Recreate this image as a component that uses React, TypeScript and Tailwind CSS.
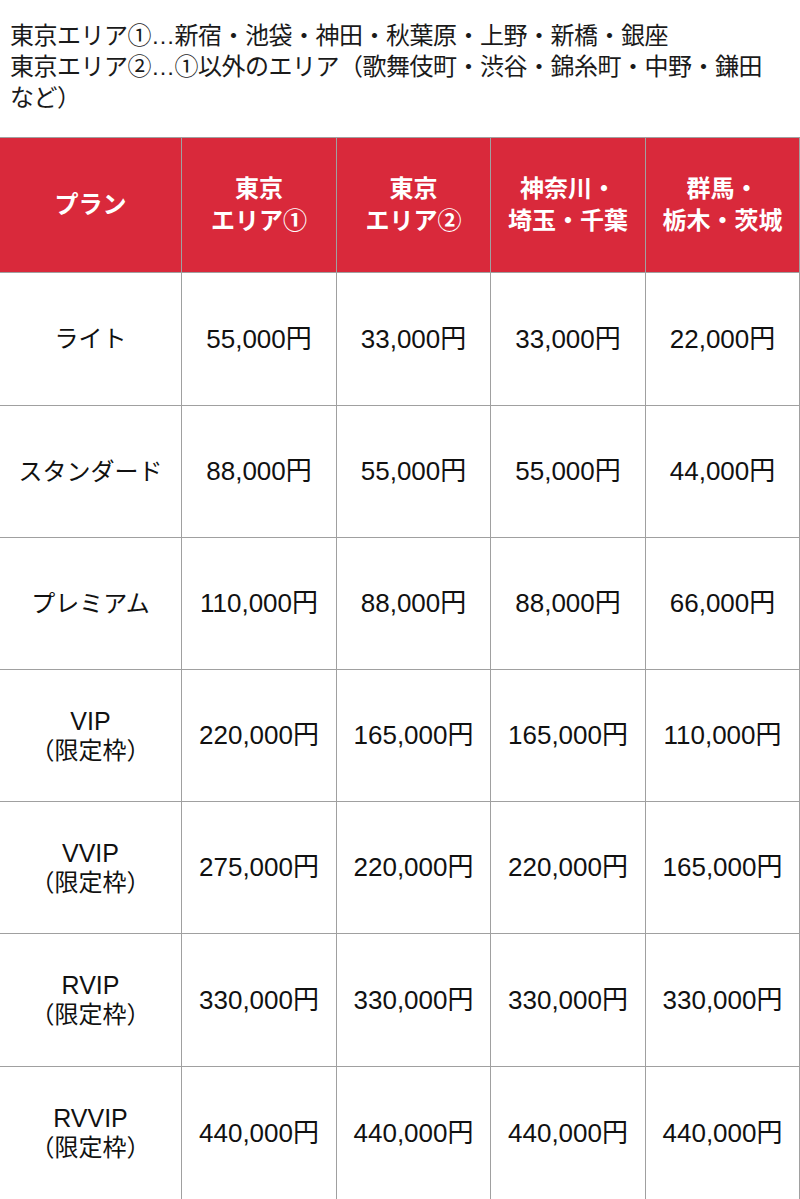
import React from "react";

const FONT = { fontFamily: '"Liberation Sans", "Noto Sans CJK JP", sans-serif' };

interface PlanRow {
	name: string;
	note?: string;
	prices: string[];
	height: string;
}

const HEADERS: string[][] = [
	["プラン"],
	["東京", "エリア①"],
	["東京", "エリア②"],
	["神奈川・", "埼玉・千葉"],
	["群馬・", "栃木・茨城"],
];

const ROWS: PlanRow[] = [
	{ name: "ライト", prices: ["55,000円", "33,000円", "33,000円", "22,000円"], height: "h-[133px]" },
	{ name: "スタンダード", prices: ["88,000円", "55,000円", "55,000円", "44,000円"], height: "h-[132px]" },
	{ name: "プレミアム", prices: ["110,000円", "88,000円", "88,000円", "66,000円"], height: "h-[132px]" },
	{ name: "VIP", note: "（限定枠）", prices: ["220,000円", "165,000円", "165,000円", "110,000円"], height: "h-[132px]" },
	{ name: "VVIP", note: "（限定枠）", prices: ["275,000円", "220,000円", "220,000円", "165,000円"], height: "h-[132px]" },
	{ name: "RVIP", note: "（限定枠）", prices: ["330,000円", "330,000円", "330,000円", "330,000円"], height: "h-[133px]" },
	{ name: "RVVIP", note: "（限定枠）", prices: ["440,000円", "440,000円", "440,000円", "440,000円"], height: "h-[133px]" },
];

const GRID = "grid grid-cols-[182px_155px_154px_155px_154px]";

function PlanName({ row }: { row: PlanRow }) {
	if (!row.note) {
		return <span className="text-[24px] leading-[30px]">{row.name}</span>;
	}
	return (
		<div className="flex flex-col items-center">
			<span className="text-[25px] leading-[30px]">{row.name}</span>
			<span className="text-[24px] leading-[30px]">{row.note}</span>
		</div>
	);
}

export default function App() {
	return (
		<div className="w-[800px] bg-white text-[#111]" style={FONT}>
			<div className="pl-[10px] pt-[20px] text-[24px] leading-[31px] tracking-[-0.5px] text-[#1a1a1a]">
				<p>東京エリア①…新宿・池袋・神田・秋葉原・上野・新橋・銀座</p>
				<p>
					東京エリア②…①以外のエリア（歌舞伎町・渋谷・錦糸町・中野・鎌田
					<br />
					など）
				</p>
			</div>

			<div className="mt-[24px]">
				<div className={`${GRID} h-[136px] border-t border-[#a0a0a0] bg-[#d9293b]`}>
					{HEADERS.map((lines) => (
						<div
							key={lines.join("")}
							className="flex flex-col items-center justify-center border-r border-b border-[#a0a0a0] text-[24px] font-bold leading-[32px] text-white"
						>
							{lines.map((line) => (
								<span key={line}>{line}</span>
							))}
						</div>
					))}
				</div>

				{ROWS.map((row) => (
					<div key={row.name} className={`${GRID} ${row.height}`}>
						<div className="flex items-center justify-center border-r border-b border-[#a0a0a0] text-center">
							<PlanName row={row} />
						</div>
						{row.prices.map((price, i) => (
							<div
								key={`${row.name}-${i}`}
								className="flex items-center justify-center border-r border-b border-[#a0a0a0] text-[26px]"
							>
								{price}
							</div>
						))}
					</div>
				))}
			</div>
		</div>
	);
}
